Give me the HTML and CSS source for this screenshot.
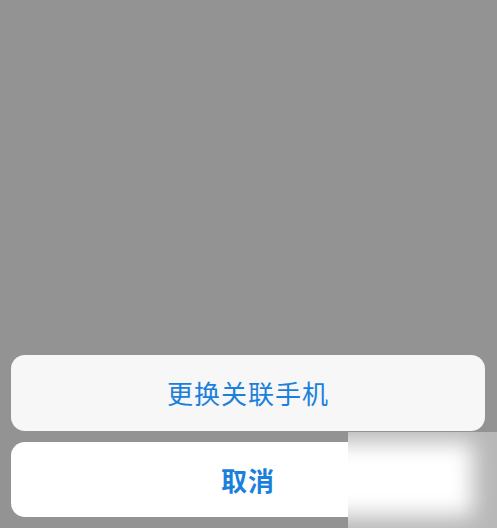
FILE: index.html
```html
<!DOCTYPE html>
<html lang="zh-CN">
<head>
<meta charset="utf-8">
<title>更换关联手机</title>
<link rel="stylesheet" href="styles.css">
</head>
<body>
<div class="screen">
  <div class="sheet">
    <div class="action action-main">更换关联手机</div>
    <div class="action action-cancel">取消</div>
  </div>
  <div class="smudge"><div class="smudge-core"></div></div>
</div>
</body>
</html>
```
FILE: styles.css
```css
html, body {
  margin: 0;
  padding: 0;
  background: #939393;
}
.screen {
  position: relative;
  width: 497px;
  height: 528px;
  overflow: hidden;
  display: flex;
  flex-direction: column;
  justify-content: flex-end;
  font-family: "Noto Sans CJK SC", "Noto Sans", sans-serif;
}
.sheet {
  display: flex;
  flex-direction: column;
  gap: 11px;
  padding: 0 12px 11px 11px;
}
.action {
  display: flex;
  align-items: center;
  justify-content: center;
  border-radius: 14px;
  color: #1b7fdc;
  font-size: 26px;
  letter-spacing: 1px;
  line-height: 1;
}
.action-main {
  height: 76px;
  background: #f7f7f7;
}
.action-cancel {
  height: 75px;
  background: #ffffff;
  font-weight: 700;
}
.smudge {
  position: absolute;
  left: 348px;
  top: 432px;
  width: 149px;
  height: 96px;
  background: #b8b8b8;
  overflow: hidden;
}
.smudge-core {
  position: absolute;
  left: -40px;
  top: 10px;
  right: 24px;
  bottom: 12px;
  background: #ffffff;
  filter: blur(11px);
}
```
